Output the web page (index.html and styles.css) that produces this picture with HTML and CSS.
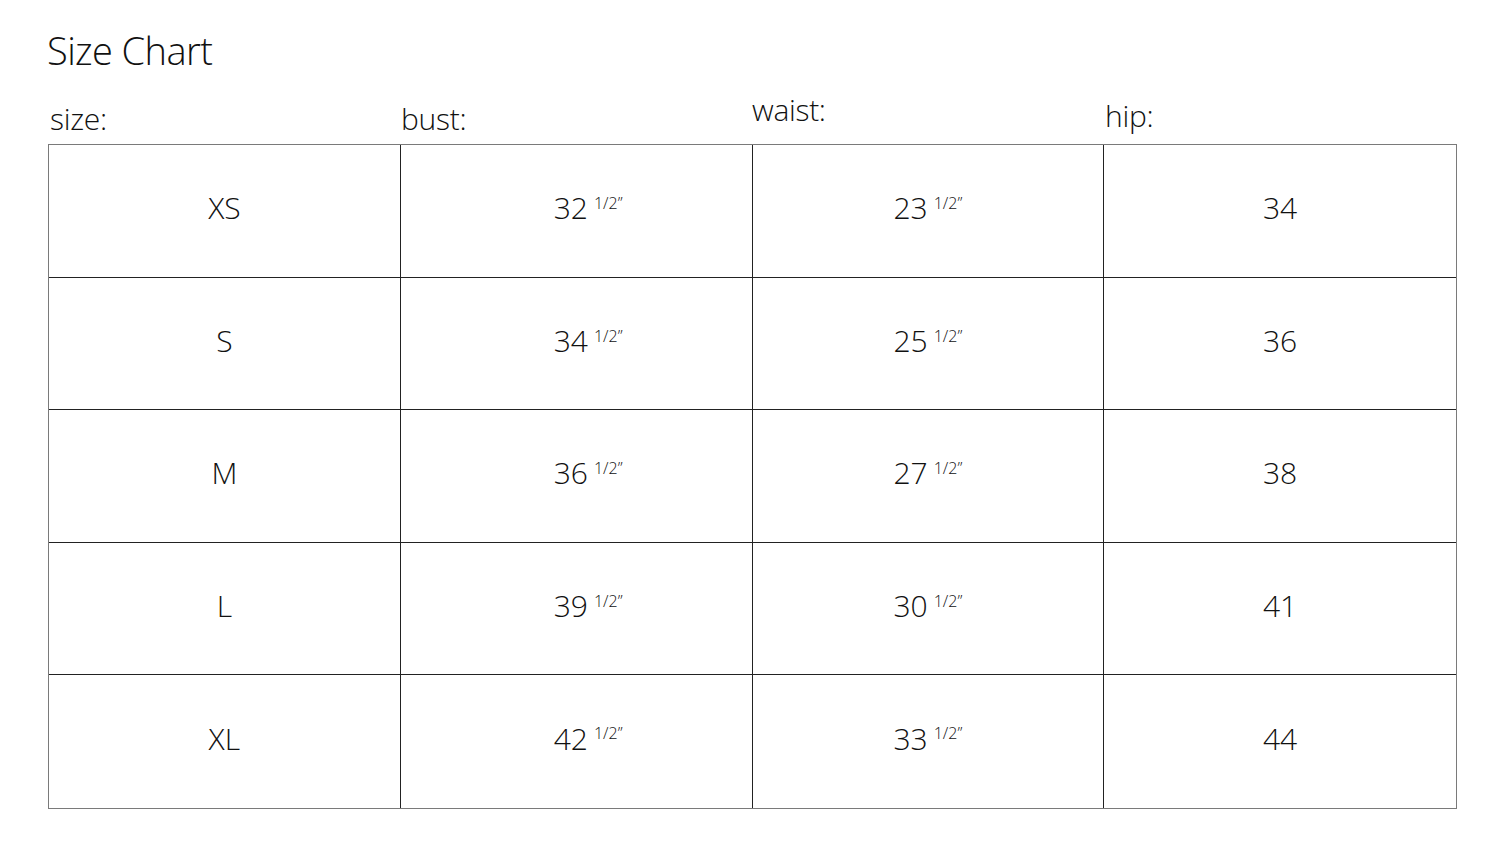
FILE: index.html
```html
<!DOCTYPE html>
<html>
<head>
<meta charset="utf-8">
<link rel="stylesheet" href="styles.css">
</head>
<body>
<div class="page">
  <h1 class="title">Size Chart</h1>
  <div class="heads">
    <div class="head h-size">size:</div>
    <div class="head h-bust">bust:</div>
    <div class="head h-waist">waist:</div>
    <div class="head h-hip">hip:</div>
  </div>
  <div class="chart">
    <div class="cell">XS</div><div class="cell bust">32<span class="frac">1/2”</span></div><div class="cell">23<span class="frac">1/2”</span></div><div class="cell">34</div>
    <div class="cell">S</div><div class="cell bust">34<span class="frac">1/2”</span></div><div class="cell">25<span class="frac">1/2”</span></div><div class="cell">36</div>
    <div class="cell">M</div><div class="cell bust">36<span class="frac">1/2”</span></div><div class="cell">27<span class="frac">1/2”</span></div><div class="cell">38</div>
    <div class="cell">L</div><div class="cell bust">39<span class="frac">1/2”</span></div><div class="cell">30<span class="frac">1/2”</span></div><div class="cell">41</div>
    <div class="cell">XL</div><div class="cell bust">42<span class="frac">1/2”</span></div><div class="cell">33<span class="frac">1/2”</span></div><div class="cell">44</div>
  </div>
</div>
</body>
</html>
```
FILE: styles.css
```css
html, body {
  margin: 0;
  padding: 0;
  background: #fff;
}
body {
  font-family: "Open Sans", "Noto Sans", sans-serif;
  font-weight: 300;
  color: #111;
}
.page {
  padding: 28px 0 0 48px;
  width: 1409px;
}
.title {
  margin: 0 0 0 -1px;
  font-size: 38px;
  font-weight: 300;
  line-height: 44px;
  letter-spacing: -0.6px;
}
.heads {
  display: grid;
  grid-template-columns: repeat(4, 352px);
  align-items: end;
  height: 72px;
}
.head {
  font-size: 30px;
  line-height: 36px;
  letter-spacing: -0.3px;
}
.h-size { padding-left: 2px; margin-bottom: 7px; }
.h-bust { padding-left: 1px; margin-bottom: 7px; }
.h-waist { margin-bottom: 16px; }
.h-hip { padding-left: 1px; margin-bottom: 10px; }
.chart {
  display: grid;
  grid-template-columns: repeat(4, 1fr);
  grid-auto-rows: 132.6px;
  border: 1px solid #7a7a7a;
  width: 1407px;
}
.cell {
  display: flex;
  align-items: center;
  justify-content: center;
  font-size: 30px;
  border-right: 1px solid #222;
  border-bottom: 1px solid #222;
  padding-bottom: 6px;
  box-sizing: border-box;
}
.cell.bust { padding-left: 24px; }
.cell:nth-child(4n) { border-right: none; }
.cell:nth-last-child(-n+4) { border-bottom: none; }
.frac {
  font-size: 16px;
  align-self: flex-start;
  margin-top: 47px;
  margin-left: 6px;
}
```
